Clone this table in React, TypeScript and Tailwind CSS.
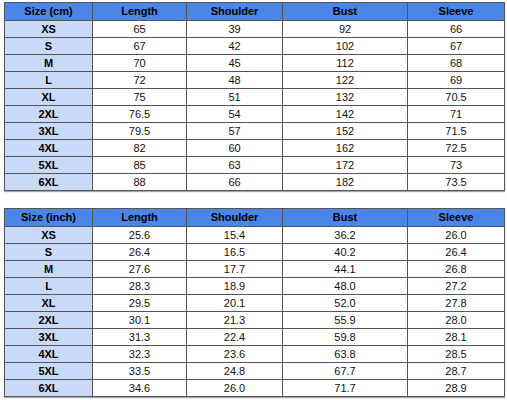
const SIZES = ['XS', 'S', 'M', 'L', 'XL', '2XL', '3XL', '4XL', '5XL', '6XL'];

const CM: string[][] = [
  ['65', '39', '92', '66'],
  ['67', '42', '102', '67'],
  ['70', '45', '112', '68'],
  ['72', '48', '122', '69'],
  ['75', '51', '132', '70.5'],
  ['76.5', '54', '142', '71'],
  ['79.5', '57', '152', '71.5'],
  ['82', '60', '162', '72.5'],
  ['85', '63', '172', '73'],
  ['88', '66', '182', '73.5'],
];

const INCH: string[][] = [
  ['25.6', '15.4', '36.2', '26.0'],
  ['26.4', '16.5', '40.2', '26.4'],
  ['27.6', '17.7', '44.1', '26.8'],
  ['28.3', '18.9', '48.0', '27.2'],
  ['29.5', '20.1', '52.0', '27.8'],
  ['30.1', '21.3', '55.9', '28.0'],
  ['31.3', '22.4', '59.8', '28.1'],
  ['32.3', '23.6', '63.8', '28.5'],
  ['33.5', '24.8', '67.7', '28.7'],
  ['34.6', '26.0', '71.7', '28.9'],
];

const HEADS = ['Length', 'Shoulder', 'Bust', 'Sleeve'];

function SizeTable({ unit, rows }: { unit: string; rows: string[][] }) {
  return (
    <table className="border-collapse table-fixed w-[500px] text-[11px] leading-none text-[#111] shadow-[0_1px_1px_rgba(0,0,0,0.35)]">
      <colgroup>
        <col className="w-[88px]" />
        <col className="w-[94px]" />
        <col className="w-[96px]" />
        <col className="w-[125px]" />
        <col className="w-[97px]" />
      </colgroup>
      <thead>
        <tr className="h-[18px] bg-[#4a86e8]">
          <th className="border border-[#555] font-bold text-black">Size ({unit})</th>
          {HEADS.map((h) => (
            <th key={h} className="border border-[#555] font-bold text-black">
              {h}
            </th>
          ))}
        </tr>
      </thead>
      <tbody>
        {rows.map((r, i) => (
          <tr key={SIZES[i]} className="h-[17px]">
            <td className="border border-[#555] bg-[#c9daf8] text-center font-bold text-black">
              {SIZES[i]}
            </td>
            {r.map((v, j) => (
              <td key={j} className="border border-[#555] bg-white text-center">
                {v}
              </td>
            ))}
          </tr>
        ))}
      </tbody>
    </table>
  );
}

export default function App() {
  return (
    <div className="w-[507px] h-[400px] bg-white pl-[4px] pt-[2px] flex flex-col gap-[17px] font-['Liberation_Sans',Arial,sans-serif]">
      <SizeTable unit="cm" rows={CM} />
      <SizeTable unit="inch" rows={INCH} />
    </div>
  );
}
